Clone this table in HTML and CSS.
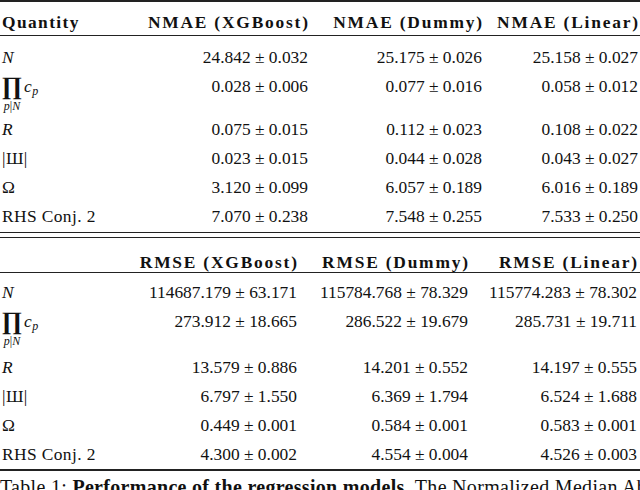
FILE: index.html
```html
<!DOCTYPE html>
<html>
<head>
<meta charset="utf-8">
<link rel="stylesheet" href="styles.css">
</head>
<body>
<div class="sec s1">
  <div class="row head">
    <div class="c1">Quantity</div>
    <div>NMAE (XGBoost)</div>
    <div>NMAE (Dummy)</div>
    <div>NMAE (Linear)</div>
  </div>
  <div class="row first">
    <div class="c1"><i>N</i></div>
    <div>24.842 ± 0.032</div>
    <div>25.175 ± 0.026</div>
    <div>25.158 ± 0.027</div>
  </div>
  <div class="row prodrow">
    <div class="c1"><span class="prod"><span class="op"><span class="big">∏</span><span class="lim"><i>p</i>|<i>N</i></span></span><span class="cp"><i>c</i><sub><i>p</i></sub></span></span></div>
    <div>0.028 ± 0.006</div>
    <div>0.077 ± 0.016</div>
    <div>0.058 ± 0.012</div>
  </div>
  <div class="row">
    <div class="c1"><i>R</i></div>
    <div>0.075 ± 0.015</div>
    <div>0.112 ± 0.023</div>
    <div>0.108 ± 0.022</div>
  </div>
  <div class="row">
    <div class="c1">|Ш|</div>
    <div>0.023 ± 0.015</div>
    <div>0.044 ± 0.028</div>
    <div>0.043 ± 0.027</div>
  </div>
  <div class="row">
    <div class="c1">Ω</div>
    <div>3.120 ± 0.099</div>
    <div>6.057 ± 0.189</div>
    <div>6.016 ± 0.189</div>
  </div>
  <div class="row last">
    <div class="c1">RHS Conj. 2</div>
    <div>7.070 ± 0.238</div>
    <div>7.548 ± 0.255</div>
    <div>7.533 ± 0.250</div>
  </div>
</div>
<div class="dbl"></div>
<div class="sec s2">
  <div class="row head">
    <div class="c1"></div>
    <div>RMSE (XGBoost)</div>
    <div>RMSE (Dummy)</div>
    <div>RMSE (Linear)</div>
  </div>
  <div class="row first">
    <div class="c1"><i>N</i></div>
    <div>114687.179 ± 63.171</div>
    <div>115784.768 ± 78.329</div>
    <div>115774.283 ± 78.302</div>
  </div>
  <div class="row prodrow">
    <div class="c1"><span class="prod"><span class="op"><span class="big">∏</span><span class="lim"><i>p</i>|<i>N</i></span></span><span class="cp"><i>c</i><sub><i>p</i></sub></span></span></div>
    <div>273.912 ± 18.665</div>
    <div>286.522 ± 19.679</div>
    <div>285.731 ± 19.711</div>
  </div>
  <div class="row">
    <div class="c1"><i>R</i></div>
    <div>13.579 ± 0.886</div>
    <div>14.201 ± 0.552</div>
    <div>14.197 ± 0.555</div>
  </div>
  <div class="row">
    <div class="c1">|Ш|</div>
    <div>6.797 ± 1.550</div>
    <div>6.369 ± 1.794</div>
    <div>6.524 ± 1.688</div>
  </div>
  <div class="row">
    <div class="c1">Ω</div>
    <div>0.449 ± 0.001</div>
    <div>0.584 ± 0.001</div>
    <div>0.583 ± 0.001</div>
  </div>
  <div class="row last">
    <div class="c1">RHS Conj. 2</div>
    <div>4.300 ± 0.002</div>
    <div>4.554 ± 0.004</div>
    <div>4.526 ± 0.003</div>
  </div>
</div>
<p class="caption">Table 1: <b>Performance of the regression models.</b> The Normalized Median Absolute Error (NMAE) and the Root Mean Squared Error (RMSE) of each model.</p>
</body>
</html>
```

FILE: styles.css
```css
html, body {
  margin: 0;
  padding: 0;
  background: #fff;
}
body {
  width: 640px;
  height: 490px;
  overflow: hidden;
  font-family: "Liberation Serif", "Times New Roman", serif;
  font-size: 17.4px;
  color: #111;
}
.sec {
  display: flex;
  flex-direction: column;
}
.s1 {
  border-top: 2px solid #222;
  padding-bottom: 1px;
}
.row {
  display: grid;
  padding: 0 2px;
  line-height: 29px;
  align-items: start;
}
.s1 .row {
  grid-template-columns: 138px 168px 174px 156px;
}
.s2 .row {
  grid-template-columns: 130px 165px 171px 169px;
}
.row > div {
  white-space: nowrap;
  text-align: right;
}
.row > .c1 {
  text-align: left;
  letter-spacing: 0.4px;
}
.head {
  font-weight: bold;
  letter-spacing: 1.8px;
  border-bottom: 1px solid #222;
}
.head > .c1 {
  letter-spacing: 1.4px;
}
.head > div:not(.c1) {
  margin-right: -1.8px;
}
.s1 .head {
  padding-top: 7px;
  line-height: 26px;
}
.s2 .head {
  padding-top: 14px;
  line-height: 20px;
}
.s1 .first {
  margin-top: 7px;
}
.s2 .first {
  margin-top: 5px;
}
.prodrow {
  height: 43px;
}
.s2 .prodrow {
  height: 46px;
}
.s2 {
  border-bottom: 2px solid #222;
}
.dbl {
  height: 4px;
  border-top: 1px solid #222;
  border-bottom: 1px solid #222;
}
.prod {
  display: inline-flex;
  align-items: flex-start;
}
.op {
  display: inline-flex;
  flex-direction: column;
  align-items: center;
  width: 20px;
  padding-top: 3px;
}
.big {
  font-size: 25px;
  font-weight: bold;
  line-height: 22px;
}
.lim {
  font-size: 12px;
  line-height: 12px;
  margin-top: 3px;
  letter-spacing: 0;
}
.cp {
  margin-left: 2px;
}
.cp sub {
  font-size: 12px;
  line-height: 0;
  vertical-align: -3px;
}
.caption {
  width: 640px;
  overflow: hidden;
  margin: 6px 0 0 0;
  padding: 0;
  font-size: 20px;
  line-height: 20px;
  letter-spacing: 0.3px;
  white-space: nowrap;
}
.caption b {
  letter-spacing: 0.3px;
}
```
